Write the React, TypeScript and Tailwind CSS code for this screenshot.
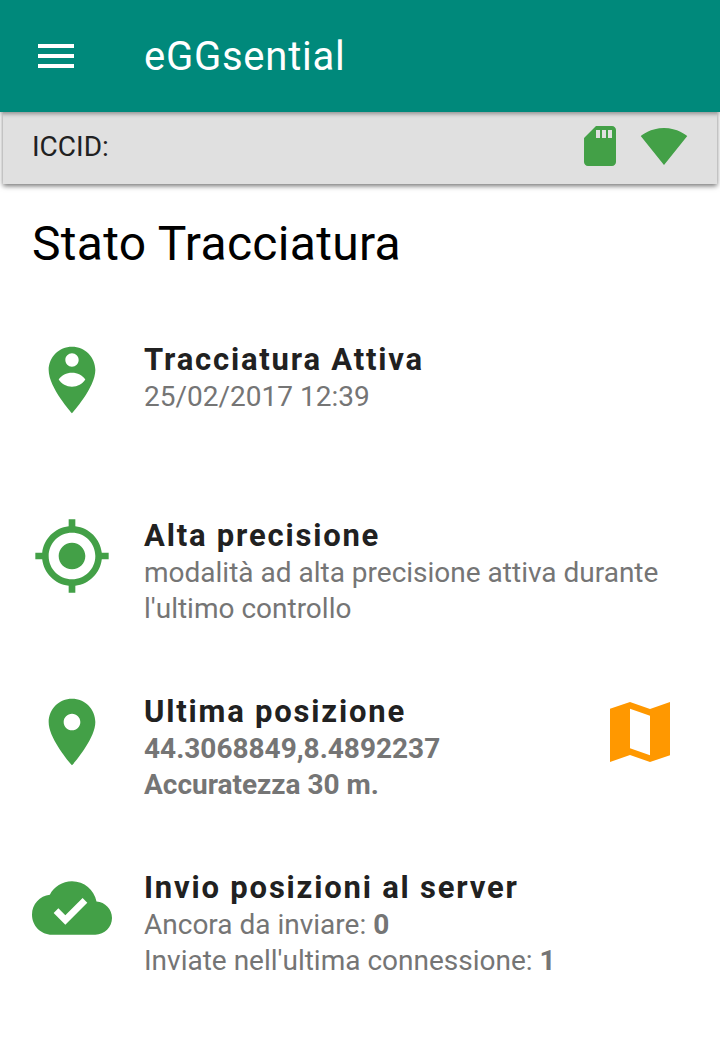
const roboto = { fontFamily: "Roboto, sans-serif" }

function Icon({ d, className }: { d: string; className: string }) {
  return (
    <svg viewBox="0 0 24 24" className={className} fill="currentColor" fillRule="evenodd">
      <path d={d} />
    </svg>
  )
}

const PERSON_PIN =
  "M12 2C8.14 2 5 5.14 5 9c0 5.25 7 13 7 13s7-7.75 7-13c0-3.86-3.14-7-7-7zm0 2c1.1 0 2 .9 2 2 0 1.11-.9 2-2 2s-2-.89-2-2c0-1.1.9-2 2-2zm0 10c-1.67 0-3.14-.85-4-2.15C8.86 10.6 10.33 9.8 12 9.8s3.14.8 4 2.05c-.86 1.3-2.33 2.15-4 2.15z"
const GPS =
  "M12 8c-2.21 0-4 1.79-4 4s1.79 4 4 4 4-1.79 4-4-1.79-4-4-4zm8.94 3c-.46-4.17-3.77-7.48-7.94-7.94V1h-2v2.06C6.83 3.52 3.52 6.83 3.06 11H1v2h2.06c.46 4.17 3.77 7.48 7.94 7.94V23h2v-2.06c4.17-.46 7.48-3.77 7.94-7.94H23v-2h-2.06zM12 19c-3.87 0-7-3.13-7-7s3.13-7 7-7 7 3.13 7 7-3.13 7-7 7z"
const PLACE =
  "M12 2C8.13 2 5 5.13 5 9c0 5.25 7 13 7 13s7-7.75 7-13c0-3.87-3.13-7-7-7zm0 9.5c-1.38 0-2.5-1.12-2.5-2.5s1.12-2.5 2.5-2.5 2.5 1.12 2.5 2.5-1.12 2.5-2.5 2.5z"
const CLOUD_DONE =
  "M19.35 10.04C18.67 6.59 15.64 4 12 4 9.11 4 6.6 5.64 5.35 8.04 2.34 8.36 0 10.91 0 14c0 3.31 2.69 6 6 6h13c2.76 0 5-2.24 5-5 0-2.64-2.05-4.78-4.65-4.96zM10 17l-3.5-3.5 1.41-1.41L10 14.17 15.18 9l1.41 1.41L10 17z"
const MAP = "M3 5l6-2 6 2.1L21 3v16l-6 2-6-2.1L3 21zM9 5v11.89l6 2.11V7.11z"
const SD_CARD =
  "M18 2h-8L4.02 8 4 20c0 1.1.9 2 2 2h12c1.1 0 2-.9 2-2V4c0-1.1-.9-2-2-2zm-6 6h-2V4h2v4zm3 0h-2V4h2v4zm3 0h-2V4h2v4z"
const WIFI = "M12.01 21.49L23.64 7c-.45-.34-4.93-4-11.64-4C5.28 3 .81 6.66.36 7l11.63 14.49.01.01.01-.01z"

function StatusRow({
  icon,
  title,
  children,
  action,
}: {
  icon: string
  title: string
  children: React.ReactNode
  action?: string
}) {
  return (
    <div className="flex h-[176px] px-8">
      <Icon d={icon} className="h-20 w-20 shrink-0 text-[#43a047]" />
      <div className="ml-8 flex-1 pt-[2px]">
        <h3 className="text-[31px] leading-9 font-bold tracking-[1.8px] text-[#212121]">{title}</h3>
        <div className="mt-px text-[28px] leading-9 text-[#757575]">{children}</div>
      </div>
      {action && <Icon d={action} className="mr-2 h-20 w-20 shrink-0 text-[#ff9800]" />}
    </div>
  )
}

export default function App() {
  return (
    <div className="h-[1050px] w-[720px] overflow-hidden bg-white" style={roboto}>
      {/* Toolbar */}
      <header className="relative z-10 flex h-28 items-center bg-[#00897b] px-[38px] text-white shadow-[0_2px_4px_rgba(0,0,0,0.35)]">
        <div className="flex w-[106px] flex-col gap-[6px]">
          <span className="h-1 w-9 bg-white" />
          <span className="h-1 w-9 bg-white" />
          <span className="h-1 w-9 bg-white" />
        </div>
        <h1 className="mt-[2px] text-[40px] tracking-[0.75px]">eGGsential</h1>
      </header>

      {/* SIM and network status */}
      <div className="mx-[3px] flex h-[72px] items-start justify-between bg-[#e0e0e0] pt-[10px] pr-[29px] pl-[29px] shadow-[0_2px_5px_rgba(0,0,0,0.55)]">
        <span className="pt-px text-[28px] leading-12 text-[#212121]">ICCID:</span>
        <div className="flex gap-4">
          <Icon d={SD_CARD} className="h-12 w-12 text-[#43a047]" />
          <Icon d={WIFI} className="h-12 w-12 text-[#43a047]" />
        </div>
      </div>

      <h2 className="mt-[31px] px-8 text-[48px] leading-[58px] tracking-[0.3px] text-black">Stato Tracciatura</h2>

      <div className="mt-[67px]">
        <StatusRow icon={PERSON_PIN} title="Tracciatura Attiva">
          25/02/2017 12:39
        </StatusRow>
        <StatusRow icon={GPS} title="Alta precisione">
          modalità ad alta precisione attiva durante
          <br />
          l'ultimo controllo
        </StatusRow>
        <StatusRow icon={PLACE} title="Ultima posizione" action={MAP}>
          <b>44.3068849,8.4892237</b>
          <br />
          <b>Accuratezza 30 m.</b>
        </StatusRow>
        <StatusRow icon={CLOUD_DONE} title="Invio posizioni al server">
          Ancora da inviare: <b>0</b>
          <br />
          Inviate nell'ultima connessione: <b>1</b>
        </StatusRow>
      </div>
    </div>
  )
}
